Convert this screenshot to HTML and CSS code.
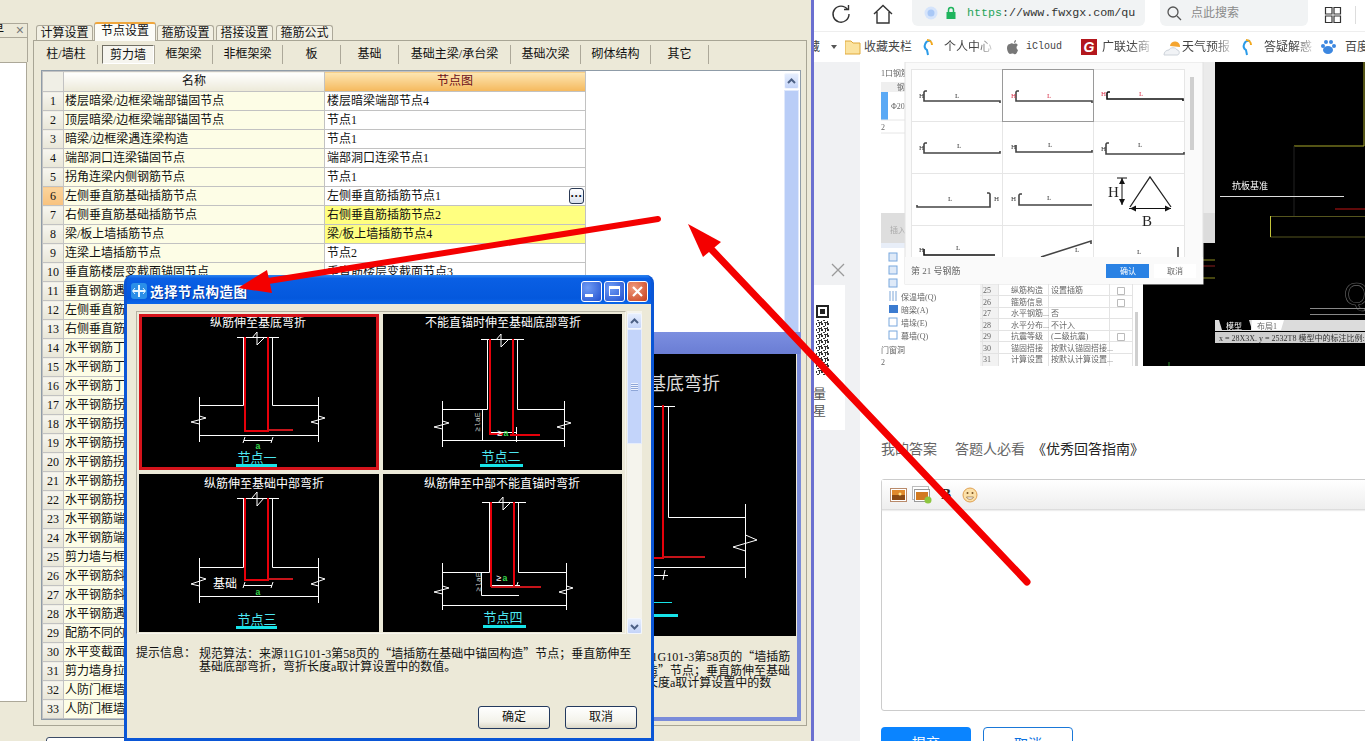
FILE: index.html
```html
<!DOCTYPE html>
<html lang="zh">
<head>
<meta charset="utf-8">
<title>节点设置</title>
<link rel="stylesheet" href="styles.css">
</head>
<body>
<div class="page">
  <section class="app">
    <aside class="dock">
      <div class="dock-head"><span class="dock-title">早</span><span class="dock-x">×</span></div>
      <div class="dock-sub"></div>
      <div class="dock-list"></div>
    </aside>
    <div class="main">
      <div class="tabs">
        <div class="tab">计算设置</div>
        <div class="tab tab-on">节点设置</div>
        <div class="tab">箍筋设置</div>
        <div class="tab">搭接设置</div>
        <div class="tab">箍筋公式</div>
      </div>
      <div class="panel">
        <div class="subtabs">
          <div class="sub w62">柱/墙柱</div>
          <div class="sub w57"><span class="pressed">剪力墙</span></div>
          <div class="sub w58">框架梁</div>
          <div class="sub w70">非框架梁</div>
          <div class="sub w58">板</div>
          <div class="sub w58">基础</div>
          <div class="sub w112">基础主梁/承台梁</div>
          <div class="sub w70">基础次梁</div>
          <div class="sub w70">砌体结构</div>
          <div class="sub w58">其它</div>
        </div>
        <div class="gridbox">
          <table class="grid">
            <colgroup><col class="c-n"><col class="c-a"><col class="c-b"></colgroup>
            <thead><tr><th class="corner"></th><th class="h-name">名称</th><th class="h-val">节点图</th></tr></thead>
            <tbody>
              <tr><th>1</th><td class="nm">楼层暗梁/边框梁端部锚固节点</td><td>楼层暗梁端部节点4</td></tr>
              <tr><th>2</th><td class="nm">顶层暗梁/边框梁端部锚固节点</td><td>节点1</td></tr>
              <tr><th>3</th><td class="nm">暗梁/边框梁遇连梁构造</td><td>节点1</td></tr>
              <tr><th>4</th><td class="nm">端部洞口连梁锚固节点</td><td>端部洞口连梁节点1</td></tr>
              <tr><th>5</th><td class="nm">拐角连梁内侧钢筋节点</td><td>节点1</td></tr>
              <tr><th class="cur">6</th><td class="nm">左侧垂直筋基础插筋节点</td><td class="has-btn">左侧垂直筋插筋节点1<span class="dots">···</span></td></tr>
              <tr><th>7</th><td class="nm">右侧垂直筋基础插筋节点</td><td class="chg">右侧垂直筋插筋节点2</td></tr>
              <tr><th>8</th><td class="nm">梁/板上墙插筋节点</td><td class="chg">梁/板上墙插筋节点4</td></tr>
              <tr><th>9</th><td class="nm">连梁上墙插筋节点</td><td>节点2</td></tr>
              <tr><th>10</th><td class="nm">垂直筋楼层变截面锚固节点</td><td>垂直筋楼层变截面节点3</td></tr>
              <tr><th>11</th><td class="nm">垂直钢筋遇</td><td></td></tr>
              <tr><th>12</th><td class="nm">左侧垂直筋</td><td></td></tr>
              <tr><th>13</th><td class="nm">右侧垂直筋</td><td></td></tr>
              <tr><th>14</th><td class="nm">水平钢筋丁</td><td></td></tr>
              <tr><th>15</th><td class="nm">水平钢筋丁</td><td></td></tr>
              <tr><th>16</th><td class="nm">水平钢筋丁</td><td></td></tr>
              <tr><th>17</th><td class="nm">水平钢筋拐</td><td></td></tr>
              <tr><th>18</th><td class="nm">水平钢筋拐</td><td></td></tr>
              <tr><th>19</th><td class="nm">水平钢筋拐</td><td></td></tr>
              <tr><th>20</th><td class="nm">水平钢筋拐</td><td></td></tr>
              <tr><th>21</th><td class="nm">水平钢筋拐</td><td></td></tr>
              <tr><th>22</th><td class="nm">水平钢筋拐</td><td></td></tr>
              <tr><th>23</th><td class="nm">水平钢筋端</td><td></td></tr>
              <tr><th>24</th><td class="nm">水平钢筋端</td><td></td></tr>
              <tr><th>25</th><td class="nm">剪力墙与框</td><td></td></tr>
              <tr><th>26</th><td class="nm">水平钢筋斜</td><td></td></tr>
              <tr><th>27</th><td class="nm">水平钢筋斜</td><td></td></tr>
              <tr><th>28</th><td class="nm">水平钢筋遇</td><td></td></tr>
              <tr><th>29</th><td class="nm">配筋不同的</td><td></td></tr>
              <tr><th>30</th><td class="nm">水平变截面</td><td></td></tr>
              <tr><th>31</th><td class="nm">剪力墙身拉</td><td></td></tr>
              <tr><th>32</th><td class="nm">人防门框墙</td><td></td></tr>
              <tr><th>33</th><td class="nm">人防门框墙</td><td></td></tr>
            </tbody>
          </table>
          <div class="gridfill"></div>
          <div class="vbar">
            <div class="sb-btn"><svg width="13" height="13" viewBox="0 0 13 13"><path d="M3 8l3.500-3.500L10 8" class="chev"/></svg></div>
            <div class="sb-thumb"></div>
          </div>
        </div>
      </div>
      <div class="strip"></div>
    </div>
  </section>

  <div class="divider"></div>

  <section class="browser">
    <div class="toolbar">
      <svg class="ic-reload" width="24" height="24" viewBox="0 0 24 24"><path d="M18.500 7.500A8 8 0 1 0 20 12" class="tool"/><path d="M15 7.500h4.500V3" class="tool"/></svg>
      <svg class="ic-home" width="24" height="24" viewBox="0 0 24 24"><path d="M3 12L12 3.500 21 12M6 10v11h12V10" class="tool"/></svg>
      <div class="addr">
        <svg width="14" height="14" viewBox="0 0 14 14"><circle cx="7" cy="7" r="6.500" fill="#d5e4fb"/><circle cx="7" cy="7" r="3.500" fill="#a9c8f6"/></svg>
        <svg width="12" height="14" viewBox="0 0 12 14"><path d="M3.500 6V4a2.500 2.500 0 0 1 5 0v2" fill="none" stroke="#1fb45d" stroke-width="1.500"/><rect x="1.500" y="6" width="9" height="7" fill="#1fb45d"/></svg>
        <span class="url"><span class="https">https</span>://www.fwxgx.com/qu</span>
      </div>
      <div class="search">
        <svg width="16" height="16" viewBox="0 0 16 16"><circle cx="7" cy="7" r="5" fill="none" stroke="#555" stroke-width="1.300"/><path d="M11 11l4 4" stroke="#555" stroke-width="1.300"/></svg>
        <span>点此搜索</span>
      </div>
      <svg class="ic-grid" width="18" height="18" viewBox="0 0 18 18"><path d="M1.500 1.500h6.500v6.500H1.500zM10 1.500h6.500v6.500H10zM1.500 10h6.500v6.500H1.500zM10 10h6.500v6.500H10z" fill="none" stroke="#333" stroke-width="1.200"/></svg>
      <div class="tool-sep"></div>
    </div>
    <div class="bookmarks">
      <span class="bm-cut">藏</span>
      <svg class="bm-caret" width="8" height="6" viewBox="0 0 8 6"><path d="M1 1h6L4 5z" fill="#555"/></svg>
      <div class="bm"><svg width="19" height="16" viewBox="0 0 19 16"><path d="M0 2h6l2 2h7v11H0z" fill="#fbe3a0" stroke="#e0a93a"/></svg><span>收藏夹栏</span></div>
      <div class="bm"><svg width="32" height="18" viewBox="0 0 32 18"><path d="M19 3a5 5 0 0 0-4 9l1 5" fill="none" stroke="#2b9be8" stroke-width="2"/><path d="M15 2a5 5 0 0 1 5 5" fill="none" stroke="#f2a81d" stroke-width="2"/></svg><span class="fade">个人中心</span></div>
      <div class="bm"><svg width="34" height="16" viewBox="0 0 34 16"><path d="M22 5c-2-1-3-1-4 0-2 0-3 2-3 4 0 3 2 6 3 6s2-1 4 0 3-1 4-4c-2-1-2-4 0-5-1-1-2-2-4-1zM22 4c0-2 1-3 2-3 0 2-1 3-2 3z" fill="#777"/></svg><span class="cloud">iCloud</span></div>
      <div class="bm"><svg width="40" height="16" viewBox="0 0 40 16"><rect x="19" y="0" width="16" height="16" fill="#b3171d"/><text x="27" y="13" class="g-mark">G</text></svg><span class="fade">广联达商</span></div>
      <div class="bm"><svg width="32" height="17" viewBox="0 0 32 17"><path d="M20 7a5 5 0 0 1 10 1z" fill="#f4a530"/><path d="M14 16c0-3 2-5 5-5 1-3 7-3 8 0 3 0 3 5 0 5z" fill="#f1f3f6" stroke="#cdd3da"/></svg><span class="fade">天气预报</span></div>
      <div class="bm"><svg width="34" height="18" viewBox="0 0 34 18"><path d="M20 3a5 5 0 0 0-4 9l1 5" fill="none" stroke="#2b9be8" stroke-width="2"/><path d="M16 2a5 5 0 0 1 5 5" fill="none" stroke="#f2a81d" stroke-width="2"/></svg><span class="fade">答疑解惑</span></div>
      <div class="bm"><svg width="33" height="16" viewBox="0 0 33 16"><g fill="#3c87e0"><ellipse cx="16" cy="11" rx="5" ry="4"/><circle cx="11" cy="7" r="2"/><circle cx="14" cy="3" r="2"/><circle cx="19" cy="3" r="2"/><circle cx="22" cy="7" r="2"/></g></svg><span>百度</span></div>
    </div>
    <div class="content">
      <aside class="gutter">
        <svg class="gut-x" width="14" height="14" viewBox="0 0 14 14"><path d="M1 1l12 12M13 1L1 13" stroke="#9a9a9a" stroke-width="1.300"/></svg>
        <div class="qrcard">
          <svg width="15" height="70" viewBox="0 0 15 70">
            <defs><pattern id="qrn" width="6" height="6" patternUnits="userSpaceOnUse"><path d="M0 0h2v2H0zM4 0h1v3H4zM2 3h2v1H2zM0 4h1v2H0zM3 5h3v1H3z" fill="#333"/></pattern></defs>
            <rect x="1" y="0" width="13" height="13" fill="#222"/><rect x="3" y="2" width="9" height="9" fill="#fff"/><rect x="5" y="4" width="5" height="5" fill="#222"/>
            <rect x="1" y="15" width="13" height="55" fill="url(#qrn)"/>
          </svg>
          <span class="qr-t1">量</span>
          <span class="qr-t2">星</span>
        </div>
      </aside>
      <div class="article">
        <svg class="shot" width="484" height="304" viewBox="0 0 484 304">
          <rect width="484" height="304" fill="#fff"/>
          <rect x="334" width="150" height="304" fill="#000"/>
          <rect x="322" width="12" height="151" fill="#ebebeb"/>
          <rect x="322" y="151" width="12" height="30" fill="#dcdcdc"/>
          <rect x="322" y="181" width="12" height="123" fill="#000"/>
          <rect x="262" y="222" width="72" height="82" fill="#000"/>
          <path d="M322 198h12" stroke="#8c8c1e"/><path d="M322 204h12" stroke="#8c1e1e"/><path d="M322 216h12" stroke="#8c8c1e"/>
          <!-- left fragments of captured page -->
          <text x="0" y="14" class="s8 gr">1口钢筋</text>
          <rect y="20" width="24" height="10" fill="#efefef"/><text x="16" y="28" class="s8 gr">钢</text>
          <rect y="30" width="7" height="28" fill="#5aa9f5"/><text x="10" y="47" class="s8 gr">Φ20</text>
          <path d="M0 58h24M0 71h24" stroke="#e6e6e6"/><text x="0" y="68" class="s8 gr">2</text>
          <rect y="151" width="24" height="30" fill="#dedede"/><text x="9" y="171" class="s8 lt">插入</text>
          <rect y="181" width="24" height="5" fill="#e8eef8"/>
          <rect x="8" y="191" width="8" height="8" fill="#dfeaf8" stroke="#78a7de"/>
          <rect x="8" y="204" width="8" height="8" fill="#dfeaf8" stroke="#78a7de"/>
          <rect x="8" y="217" width="8" height="8" fill="#dfeaf8" stroke="#78a7de"/>
          <path d="M9 229v10M12 229v10M15 229v10" stroke="#7da6d8"/>
          <rect x="8" y="243" width="9" height="8" fill="#3b7bd0"/>
          <rect x="8" y="256" width="8" height="8" fill="#fff" stroke="#78a7de"/>
          <rect x="8" y="269" width="8" height="8" fill="#fff" stroke="#78a7de"/>
          <text x="20" y="238" class="s8 gr">保温墙(Q)</text>
          <text x="20" y="251" class="s8 gr">暗梁(A)</text>
          <text x="20" y="264" class="s8 gr">墙垛(E)</text>
          <text x="20" y="277" class="s8 gr">幕墙(Q)</text>
          <text x="0" y="291" class="s8 gr">门窗洞</text>
          <text x="0" y="303" class="s8 gr">2</text>
          <!-- property table -->
          <rect x="99" y="222" width="163" height="82" fill="#fff"/>
          <rect x="99" y="222" width="18" height="82" fill="#f2f2f2"/>
          <path d="M101.500 222v82M117.500 222v82M167.500 222v82M228.500 222v82M251.500 222v82M99 233.500h153M99 245.500h153M99 256.500h153M99 268.500h153M99 279.500h153M99 291.500h153" stroke="#e3e3e3"/>
          <rect x="254" y="250" width="3" height="54" fill="#cfcfcf"/>
          <g class="s8 gr">
            <text x="102" y="231">25</text><text x="130" y="231">纵筋构造</text><text x="170" y="231">设置插筋</text>
            <text x="102" y="243">26</text><text x="130" y="243">箍筋信息</text>
            <text x="102" y="254">27</text><text x="130" y="254">水平钢筋...</text><text x="170" y="254">否</text>
            <text x="102" y="266">28</text><text x="130" y="266">水平分布...</text><text x="170" y="266">不计入</text>
            <text x="102" y="277">29</text><text x="130" y="277">抗震等级</text><text x="170" y="277">(二级抗震)</text>
            <text x="102" y="289">30</text><text x="130" y="289">锚固搭接</text><text x="170" y="289">按默认锚固搭接...</text>
            <text x="102" y="300">31</text><text x="130" y="300">计算设置</text><text x="170" y="300">按默认计算设置...</text>
          </g>
          <path d="M236.500 225.500h7v7h-7zM236.500 237.500h7v7h-7zM236.500 271.500h7v7h-7z" fill="#fff" stroke="#bbb"/>
          <!-- CAD drawing -->
          <path d="M413 84h70V0" fill="none" stroke="#a8a82a"/>
          <path d="M413 84v70" stroke="#222"/>
          <path d="M339 134.500h124" stroke="#ddd"/>
          <path d="M454 147h30" stroke="#c01515"/>
          <path d="M389.500 175V154.500H484M389.500 175H484" fill="none" stroke="#55551e"/>
          <path d="M389.500 154v21" stroke="#c4c43a"/>
          <text x="351" y="127" class="cad-note">抗板基准</text>
          <text x="463" y="243" class="cad-q">Q2</text>
          <path d="M429 246.500h55M429 252.500h55" stroke="#888"/>
          <rect x="334" y="258" width="150" height="11" fill="#dcdcdc"/>
          <path d="M338 258h30l3 10h-30z" fill="#000"/><text x="345" y="267" class="s8 wh">模型</text>
          <path d="M371 258h32l-3 10h-30z" fill="#fff"/><text x="376" y="267" class="s8 gr">布局1</text>
          <rect x="334" y="270" width="150" height="11" fill="#cfcfcf"/>
          <text x="338" y="279" class="s8 dk">x = 28X3X. y = 2532T8 模型中的标注比例:1</text>
          <path d="M288 300v4" stroke="#2a8a2a"/>
          <!-- rebar picker dialog -->
          <rect x="24" y="0" width="298" height="222" fill="#fafafa" stroke="#e2e2e2"/>
          <rect x="30" y="7" width="273" height="188" fill="#fff"/>
          <path d="M30.500 7v188M121.500 7v188M212.500 7v188M303.500 7v188M30 7.500h273M30 59.500h273M30 111.500h273M30 163.500h273" stroke="#e6e6e6"/>
          <rect x="121.500" y="7.500" width="91" height="52" fill="none" stroke="#9a9a9a"/>
          <rect x="309" y="15" width="4" height="73" fill="#cfcfcf"/>
          <path d="M46 29h-2l-1 1v9h76v2" class="bar"/><text x="38" y="36" class="s7 dk">H</text><text x="74" y="36" class="s7 dk">L</text>
          <path d="M138 29h-2l-1 1v9h76v2" class="bar"/><text x="130" y="36" class="s7 rd">H</text><text x="166" y="36" class="s7 rd">L</text>
          <path d="M229 30h-2l-1 1v6h76v2" class="bar bar-k"/><text x="220" y="34" class="s7 rd">H</text><text x="258" y="34" class="s7 rd">L</text>
          <path d="M46 81h-2l-1 1v9h76v-2" class="bar"/><text x="38" y="88" class="s7 dk">H</text><text x="76" y="86" class="s7 dk">L</text>
          <path d="M135 83v7h76v-2" class="bar"/><text x="130" y="87" class="s7 dk">H</text><text x="167" y="85" class="s7 dk">L</text>
          <path d="M228 81h-2l-1 1v10h78v-2" class="bar"/><text x="220" y="89" class="s7 dk">H</text><text x="257" y="85" class="s7 dk">L</text>
          <path d="M36 143v2h73v-13l-1-1h-2" class="bar"/><text x="113" y="139" class="s7 dk">H</text><text x="67" y="139" class="s7 dk">L</text>
          <path d="M141 132h-2l-1 1v10h73" class="bar"/><text x="130" y="139" class="s7 dk">H</text><text x="166" y="138" class="s7 dk">L</text>
          <path d="M249 145l20-30 21 30" fill="none" stroke="#222" stroke-width="1.300"/>
          <path d="M248 146.500h42M241 116v27M236 116h10" fill="none" stroke="#111"/>
          <path d="M241 116l-3 6h6zM241 143l-3-6h6zM249 146.500l6-3v6zM290 146.500l-6-3v6z" fill="#111"/>
          <text x="227" y="135" class="big-l">H</text><text x="261" y="164" class="big-l">B</text>
          <path d="M43 187v6h71" class="bar bar-k"/><text x="38" y="190" class="s7 dk">H</text><text x="75" y="188" class="s7 dk">L</text>
          <path d="M160 195l50-16v3" class="bar"/><text x="194" y="190" class="s7 dk">L</text>
          <path d="M297 185v10" class="bar"/><text x="256" y="192" class="s7 dk">L</text>
          <rect x="24" y="195" width="298" height="27" fill="#fafafa"/>
          <text x="30" y="212" class="s9 gr">第 21 号钢筋</text>
          <rect x="225" y="202" width="43" height="14" fill="#2a82e4"/><text x="239" y="212" class="s8 wh">确认</text>
          <rect x="273" y="202" width="42" height="14" fill="#fff"/><text x="286" y="212" class="s8 gr">取消</text>
        </svg>
        <div class="answer-head"><span class="ah1">我的答案</span><span class="ah2">答题人必看</span><span class="ah3">《优秀回答指南》</span></div>
        <div class="editor">
          <div class="ed-bar">
            <svg width="17" height="14" viewBox="0 0 17 14"><rect x=".5" y=".5" width="16" height="13" fill="#fff" stroke="#b98a6a"/><rect x="2" y="2" width="13" height="10" fill="#8a4a14"/><rect x="2" y="2" width="13" height="5" fill="#e08a2c"/><circle cx="10" cy="6" r="1.500" fill="#ffe48a"/></svg>
            <svg width="20" height="18" viewBox="0 0 20 18"><rect x=".5" y=".5" width="16" height="13" fill="#fff" stroke="#bbb"/><rect x="2.500" y="3.500" width="15" height="12" fill="#fff" stroke="#999"/><rect x="4" y="6" width="12" height="8" fill="#d27a20"/><circle cx="16" cy="14" r="3.500" fill="#8dc63f"/></svg>
            <span class="ed-b">B</span>
            <svg width="16" height="16" viewBox="0 0 16 16"><circle cx="8" cy="8" r="7" fill="#fbe0a8" stroke="#e0a050"/><circle cx="5.500" cy="6" r="1" fill="#7a5020"/><circle cx="10.500" cy="6" r="1" fill="#7a5020"/><path d="M4.500 10h7c-1 3-6 3-7 0z" fill="#fff" stroke="#7a5020" stroke-width=".6"/></svg>
          </div>
        </div>
        <div class="actions"><div class="btn-submit">提交</div><div class="btn-cancel">取消</div></div>
      </div>
    </div>
  </section>

  <!-- window behind the dialog -->
  <div class="backwin">
    <div class="back-title"></div>
    <svg class="back-pic" width="292" height="282" viewBox="504 354 292 282">
      <rect x="504" y="354" width="292" height="282" fill="#000"/>
      <text x="720" y="390" class="back-h" text-anchor="end">基底弯折</text>
      <path d="M653 406.500h22M668.500 406V517.500H745.500M745.500 504V578M653 567.500H745.500M653 575.500h15M665 570l-2 10" class="w"/>
      <path d="M745.500 535L757 540 733 547 745.500 551" class="w"/>
      <path d="M663 405V558H653" class="r"/>
      <path d="M663 557h42" class="r2"/>
      <path d="M653 602.500h19" class="cy"/>
      <rect x="653" y="614" width="25" height="3" fill="#17e3e8"/>
    </svg>
    <div class="back-clip"><div class="back-text">规范算法：来源11G101-3第58页的<span class="q">“</span>墙插筋<br>在基础中锚固构造<span class="q">”</span>节点；垂直筋伸至基础<br>底部弯折，弯折长度a取计算设置中的数</div></div>
  </div>

  <!-- dialog -->
  <div class="dialog">
    <div class="dlg-title">
      <svg width="16" height="16" viewBox="0 0 16 16"><rect width="16" height="16" rx="3" fill="#2b8fe8"/><path d="M8 2v12M2 8h12" stroke="#e8f6ff" stroke-width="2"/><path d="M4 5L1.500 8 4 11M12 5l2.500 3L12 11" fill="none" stroke="#e8f6ff"/></svg>
      <span class="dlg-name">选择节点构造图</span>
      <span class="cap cap-min"><i class="g-min"></i></span>
      <span class="cap cap-max"><i class="g-max"></i></span>
      <span class="cap cap-close"><svg width="13" height="13" viewBox="0 0 13 13"><path d="M2 2l9 9M11 2l-9 9" stroke="#fff" stroke-width="2.200"/></svg></span>
    </div>
    <div class="dlg-body">
      <div class="pics">
        <div class="picgrid">
          <svg class="fig fig-on" width="240" height="156" viewBox="0 0 240 156">
            <rect width="240" height="156" fill="#000"/>
            <text x="119" y="13" class="t">纵筋伸至基底弯折</text>
            <path d="M98 23.500H140M104.500 23V91.500H60.500M133.500 23V91.500H179.500M60.500 83V128M179.500 83V128M60 121.500H180M105 126.500H133M106 123l-2 6M134 123l-2 6" class="w"/>
            <path d="M113 24L118 18V31L125 24M60.500 102L67 104 52 108 60.500 110M179.500 102L186 104 172 108 179.500 110" class="w"/>
            <path d="M106 23V117H129V23" class="r"/>
            <path d="M129 116H154" class="r2"/>
            <text x="119" y="135" class="a">a</text>
            <text x="118" y="148" class="lab">节点一</text>
            <rect x="97" y="150" width="41" height="3" fill="#17e3e8"/>
            <rect x="1.500" y="1.500" width="237" height="153" class="sel"/>
          </svg>
          <svg class="fig" width="239" height="156" viewBox="0 0 239 156">
            <rect width="239" height="156" fill="#000"/>
            <text x="120" y="13" class="t">不能直锚时伸至基础底部弯折</text>
            <path d="M98 25.500H141M104.500 25V95.500H59.500M134.500 25V95.500H181.500M59.500 87V133M181.500 87V133M59 126.500H182M99.500 96V126.500M107 118.500H134M133.500 113V128" class="w"/>
            <path d="M113 26L118 20V33L125 26M59.500 107L66 109 51 113 59.500 115M181.500 107L188 109 174 113 181.500 115" class="w"/>
            <path d="M107 25V120H120M130 25V120" class="r"/>
            <path d="M127 121H157" class="r"/>
            <text x="117" y="122" class="ge">≥</text><text x="123" y="122" class="a">a</text>
            <text transform="translate(97 108) rotate(-90)" class="la">≥laE</text>
            <text x="118" y="147" class="lab">节点二</text>
            <rect x="97" y="150" width="43" height="3" fill="#17e3e8"/>
          </svg>
          <svg class="fig" width="240" height="158" viewBox="0 0 240 158">
            <rect width="240" height="158" fill="#000"/>
            <text x="125" y="14" class="t">纵筋伸至基础中部弯折</text>
            <path d="M98 24.500H140M104.500 24V93.500H60.500M133.500 24V93.500H179.500M60.500 84V129M179.500 84V129M60 122.500H180M105 111.500H133M106 108l-2 6M134 108l-2 6" class="w"/>
            <path d="M113 24L118 18V32L125 24M60.500 103L67 105 52 110 60.500 112M179.500 103L186 105 172 110 179.500 112" class="w"/>
            <path d="M106 24V106H129V24" class="r"/>
            <path d="M129 105H154" class="r2"/>
            <text x="86" y="114" class="t">基础</text>
            <text x="119" y="121" class="a">a</text>
            <text x="118" y="150" class="lab">节点三</text>
            <rect x="97" y="152" width="41" height="3" fill="#17e3e8"/>
          </svg>
          <svg class="fig" width="239" height="158" viewBox="0 0 239 158">
            <rect width="239" height="158" fill="#000"/>
            <text x="119" y="14" class="t">纵筋伸至中部不能直锚时弯折</text>
            <path d="M99 28.500H143M106.500 28V98.500H59.500M135.500 28V98.500H183.500M59.500 89V136M183.500 89V136M59 131.500H184M98.500 99V121.500H136M108 111.500H137M135 108l-2 6" class="w"/>
            <path d="M115 29L120 23V36L127 29M59.500 112L66 114 51 118 59.500 120M183.500 112L190 114 176 118 183.500 120" class="w"/>
            <path d="M108 28V113M131 28V113" class="r"/>
            <path d="M108 113H158" class="r2"/>
            <text x="116" y="107" class="ge">≥</text><text x="122" y="107" class="a">a</text>
            <text transform="translate(98 108) rotate(-90)" class="la">≥laE</text>
            <text x="120" y="148" class="lab">节点四</text>
            <rect x="100" y="151" width="43" height="3" fill="#17e3e8"/>
          </svg>
        </div>
        <div class="dlg-bar">
          <div class="sb-btn"><svg width="13" height="13" viewBox="0 0 13 13"><path d="M3 8l3.500-3.500L10 8" class="chev"/></svg></div>
          <div class="dlg-thumb"><span class="grip"></span></div>
          <div class="dlg-track"></div>
          <div class="sb-btn"><svg width="13" height="13" viewBox="0 0 13 13"><path d="M3 5l3.500 3.500L10 5" class="chev"/></svg></div>
        </div>
      </div>
      <div class="hint">
        <div class="hint-l">提示信息：</div>
        <div class="hint-t">规范算法：来源11G101-3第58页的<span class="q">“</span>墙插筋在基础中锚固构造<span class="q">”</span>节点；垂直筋伸至<br>基础底部弯折，弯折长度a取计算设置中的数值。</div>
      </div>
      <div class="dlg-btns"><div class="xp-btn">确定</div><div class="xp-btn">取消</div></div>
    </div>
  </div>

  <!-- hand-drawn annotation arrows -->
  <svg class="marks" width="1365" height="741" viewBox="0 0 1365 741">
    <path d="M658 219L262 282" stroke="#f40000" stroke-width="6" stroke-linecap="round"/>
    <path d="M238 288L267 270 272 293z" fill="#f40000"/>
    <path d="M1027 582L712 250" stroke="#f40000" stroke-width="7" stroke-linecap="round"/>
    <path d="M688 224L721 242 703 257z" fill="#f40000"/>
  </svg>
</div>
</body>
</html>
```
FILE: styles.css
```css
* { box-sizing: border-box; }
html, body { margin: 0; padding: 0; }
body {
  font: 12px/1.2 "Liberation Serif", "Noto Sans CJK SC", serif;
  color: #111;
  background: #fff;
}
.page {
  position: relative;
  display: flex;
  width: 1365px;
  height: 741px;
  overflow: hidden;
}

/* left application */
.app {
  display: flex;
  flex: none;
  width: 811px;
  height: 741px;
  background: #ece9d8;
}
.dock { flex: none; width: 28px; margin-right: 5px; padding-top: 23px; }
.dock-head {
  display: flex;
  justify-content: space-between;
  height: 15px;
  overflow: hidden;
  border: 1px solid #aca899;
  border-left: 0;
  line-height: 13px;
}
.dock-title { margin-left: -8px; }
.dock-x { margin-right: 3px; color: #777; font: 14px/13px "Liberation Sans", sans-serif; }
.dock-sub { height: 24px; border-right: 1px solid #aca899; }
.dock-list {
  width: 27px;
  height: 640px;
  background: #fff;
  border: 1px solid #aca899;
  border-left: 0;
}
.main { flex: none; width: 774px; padding-top: 22px; }
.tabs { display: flex; gap: 1px; height: 18px; padding-left: 3px; align-items: flex-end; }
.tab {
  position: relative;
  width: 57px;
  height: 15px;
  background: #f2f0e4;
  border: 1px solid #aca899;
  border-bottom: 0;
  border-radius: 3px 3px 0 0;
  text-align: center;
  line-height: 15px;
}
.tab:nth-child(4) { margin-left: 1px; }
.tab:nth-child(5) { margin-left: 2px; }
.tab-on {
  width: 62px;
  height: 19px;
  margin-bottom: -1px;
  background: #fcfcf8;
  border-top: 2px solid #f0a63c;
  line-height: 15px;
  z-index: 1;
}
.panel {
  height: 686px;
  border: 1px solid #a8a595;
  background: #ece9d8;
  padding: 4px 0 0 1px;
}
.subtabs { display: flex; height: 19px; }
.sub {
  flex: none;
  display: flex;
  align-items: center;
  justify-content: center;
  border-right: 1px solid #aca899;
  height: 19px;
}
.w57 { width: 57px; justify-content: flex-end; }
.w58 { width: 58px; }
.w62 { width: 63px; }
.w70 { width: 70px; }
.w112 { width: 112px; }
.pressed {
  display: block;
  width: 52px;
  height: 19px;
  text-align: center;
  line-height: 18px;
  background: #f6f5ef;
  border: 1px solid;
  border-color: #716f64 #fff #fff #716f64;
}
.gridbox {
  display: flex;
  width: 760px;
  height: 650px;
  margin: 6px 0 0 6px;
  background: #fff;
  border: 1px solid #8f9ca8;
}
.grid {
  flex: none;
  width: 543px;
  border-collapse: collapse;
  table-layout: fixed;
  margin-top: 0;
  align-self: flex-start;
}
.c-n { width: 21px; }
.c-a { width: 261px; }
.c-b { width: 261px; }
.grid th, .grid td {
  height: 19px;
  padding: 0 2px;
  border: 1px solid #c2c2c2;
  font-weight: normal;
  line-height: 17px;
  white-space: nowrap;
  overflow: hidden;
  text-align: left;
}
.grid tbody th {
  text-align: center;
  padding: 0;
  background: linear-gradient(#f7f6f0, #e8e6d8);
}
.grid tbody th.cur { background: linear-gradient(#fbd49c, #f8c27e); }
.corner { background: #f0efe6; }
.grid thead th {
  text-align: center;
  height: 20px;
}
.h-name { background: linear-gradient(#fff, #ece9d8); }
.grid thead .h-val { background: linear-gradient(#fde7b4, #f5b85c); color: #6b0f1a; }
.grid .nm { background: #fdfde6; padding-left: 1px; }
.chg { background: #ffff80; }
.has-btn { position: relative; }
.dots {
  position: absolute;
  right: 1px;
  top: 1px;
  width: 15px;
  height: 16px;
  border: 1px solid #2b3a55;
  border-radius: 3px;
  background: linear-gradient(#fff, #d8e0ee);
  font: bold 12px/14px "Liberation Sans", sans-serif;
  text-align: center;
}
.gridfill { flex: 1; }
.vbar { flex: none; width: 17px; padding: 2px 1px 0 1px; }
.sb-btn {
  display: flex;
  align-items: center;
  justify-content: center;
  width: 15px;
  height: 16px;
  background: linear-gradient(#e6eefd, #c4d4f8);
  border: 1px solid #f2f6fe;
  border-radius: 2px;
}
.chev { fill: none; stroke: #4d6185; stroke-width: 2; }
.sb-thumb {
  height: 620px;
  margin-top: 1px;
  background: #b9cdf7;
  border: 1px solid #dfe8fb;
}
.strip {
  width: 400px;
  height: 20px;
  margin: 11px 0 0 13px;
  background: #fff;
  border: 1px solid #3b4b66;
  border-radius: 3px;
}

.divider { flex: none; width: 3px; background: #6b70d0; }

/* browser */
.browser { flex: 1; min-width: 0; background: #fff; }
.toolbar {
  display: flex;
  align-items: flex-start;
  height: 32px;
  border-bottom: 1px solid #eee;
}
.tool { fill: none; stroke: #333; stroke-width: 1.400; }
.ic-reload { margin: 2px 0 0 15px; flex: none; }
.ic-home { margin: 2px 0 0 18px; flex: none; }
.addr {
  flex: none;
  display: flex;
  align-items: center;
  gap: 7px;
  width: 233px;
  height: 26px;
  margin-left: 17px;
  padding-left: 12px;
  background: #f1f3f4;
  border-radius: 0 0 6px 6px;
}
.url {
  font: 11.700px/26px "Liberation Mono", monospace;
  color: #333;
  white-space: nowrap;
  margin-left: 3px;
}
.https { color: #1fa45a; }
.search {
  flex: none;
  display: flex;
  align-items: center;
  gap: 9px;
  width: 148px;
  height: 26px;
  margin-left: 15px;
  padding-left: 6px;
  background: #f1f3f4;
  border-radius: 0 0 6px 6px;
  color: #8a8a8a;
  font-size: 12px;
}
.ic-grid { flex: none; margin: 6px 0 0 16px; }
.tool-sep { width: 1px; height: 18px; margin: 6px 0 0 13px; background: #ddd; }
.bookmarks {
  display: flex;
  align-items: center;
  height: 30px;
  color: #444;
  white-space: nowrap;
  overflow: hidden;
}
.bm-cut { flex: none; width: 6px; direction: rtl; overflow: hidden; }
.bm-caret { flex: none; margin: 0 0 0 10px; }
.bm { flex: none; display: flex; align-items: center; }
.bm:nth-of-type(1) { margin-left: 7px; }
.bm span { display: block; }
.fade {
  -webkit-mask-image: linear-gradient(to right, #000 65%, rgba(0,0,0,.25));
  mask-image: linear-gradient(to right, #000 65%, rgba(0,0,0,.25));
}
.cloud { font-family: "Liberation Mono", monospace; font-size: 10px; }
.g-mark { font: italic bold 14px "Liberation Sans", sans-serif; fill: #fff; text-anchor: middle; }
.content { display: flex; height: 679px; }
.gutter { flex: none; width: 46px; background: #f0f1f3; padding-top: 201px; }
.gut-x { display: block; margin-left: 17px; }
.qrcard {
  display: flex;
  flex-direction: column;
  align-items: flex-start;
  width: 31px;
  height: 145px;
  margin-top: 8px;
  padding-top: 20px;
  background: #fff;
  overflow: hidden;
}
.qrcard svg { flex: none; margin-left: 1px; }
.qr-t1, .qr-t2 { font-size: 13px; color: #555; margin-left: -1px; line-height: 17px; }
.qr-t1 { margin-top: 10px; }
.article { flex: 1; min-width: 0; padding-left: 21px; overflow: hidden; }
.shot { display: block; filter: blur(.4px); }
.s7 { font-size: 7px; }
.s8 { font-size: 8px; }
.s9 { font-size: 9px; }
.gr { fill: #666; }
.lt { fill: #aaa; }
.wh { fill: #fff; }
.dk { fill: #333; }
.rd { fill: #d8324a; }
.bar { fill: none; stroke: #444; stroke-width: 1.600; }
.bar-k { stroke: #111; }
.big-l { font: 15px "Liberation Serif", serif; fill: #222; }
.cad-note { font-size: 9px; fill: #fff; letter-spacing: 0; }
.cad-q { font: 32px "Liberation Sans", sans-serif; fill: none; stroke: #6a6a6a; stroke-width: .6; }
.answer-head {
  display: flex;
  height: 17px;
  margin-top: 74px;
  font-size: 14px;
  line-height: 17px;
  font-family: "Noto Sans CJK SC", sans-serif;
  white-space: nowrap;
}
.ah1, .ah2 { color: #666; margin-right: 18px; }
.ah2 { margin-right: 14px; }
.ah3 { color: #222; margin-left: -7px; }
.editor {
  width: 520px;
  height: 232px;
  margin-top: 22px;
  border: 1px solid #ccc;
  border-radius: 3px;
}
.ed-bar {
  display: flex;
  align-items: center;
  height: 30px;
  padding-left: 8px;
  gap: 5px;
  background: linear-gradient(#fff, #eeeeee);
  border-bottom: 1px solid #ddd;
  box-shadow: 0 1px 1px #eee;
}
.ed-b { font: bold 15px "Liberation Serif", serif; color: #222; margin: 0 6px 0 4px; }
.actions { display: flex; gap: 12px; margin-top: 16px; }
.btn-submit, .btn-cancel {
  width: 90px;
  height: 34px;
  border-radius: 4px;
  text-align: center;
  line-height: 30px;
  font-size: 14px;
  font-family: "Noto Sans CJK SC", sans-serif;
}
.btn-submit { background: #0a84ff; color: #fff; }
.btn-cancel { border: 1px solid #1a78d8; color: #0a70e0; background: #fff; }

/* window behind dialog */
.backwin {
  position: absolute;
  left: 500px;
  top: 332px;
  width: 301px;
  height: 389px;
  background: #ece9d8;
  border: 4px solid #7a8bd9;
  border-top: 0;
}
.back-title { height: 22px; background: linear-gradient(#7c8fe0, #6a7dd4); margin: 0 -4px; }
.back-pic { display: block; }
.back-h { font-size: 18px; fill: #ddd; }
.w { fill: none; stroke: #fff; }
.r { fill: none; stroke: #e6000a; stroke-width: 2; }
.r2 { fill: none; stroke: #c6141a; stroke-width: 2; }
.cy { stroke: #17e3e8; }
.q { font-family: "Noto Sans CJK SC", sans-serif; }
.back-clip {
  width: 143px;
  margin: 14px 0 0 149px;
  overflow: hidden;
}
.back-text {
  margin-left: -91px;
  line-height: 12.500px;
  white-space: nowrap;
}

/* dialog */
.dialog {
  position: absolute;
  left: 124px;
  top: 275px;
  width: 530px;
  height: 466px;
  display: flex;
  flex-direction: column;
  background: #0a56d6;
  border: 3px solid #0a56d6;
  border-top: 0;
  border-radius: 8px 8px 0 0;
  overflow: hidden;
  z-index: 3;
}
.dlg-title {
  flex: none;
  display: flex;
  align-items: center;
  height: 29px;
  padding: 3px 3px 0 4px;
  background: linear-gradient(#2e86f0 0, #0a5fe4 12%, #0458dd 80%, #0a66ea 100%);
}
.dlg-name {
  flex: 1;
  margin-left: 3px;
  color: #fff;
  font: bold 13.500px/16px "Noto Sans CJK SC", sans-serif;
  letter-spacing: .4px;
  text-shadow: 1px 1px 0 #0338a0;
}
.cap {
  flex: none;
  display: flex;
  align-items: center;
  justify-content: center;
  width: 21px;
  height: 21px;
  margin-left: 2px;
  border: 1px solid #fff;
  border-radius: 3px;
  background: radial-gradient(circle at 30% 30%, #6f9cf5, #2150cf);
}
.cap-close { background: radial-gradient(circle at 30% 30%, #ef9a7c, #c8401c); }
.g-min { display: block; width: 8px; height: 3px; margin: 8px 6px 0 0; background: #fff; }
.g-max { display: block; width: 11px; height: 10px; border: 1px solid #fff; border-top-width: 3px; }
.dlg-body {
  flex: 1;
  display: flex;
  flex-direction: column;
  padding: 7px 0 0 9px;
  background: #ece9d8;
}
.pics { flex: none; display: flex; height: 323px; }
.picgrid {
  flex: none;
  display: grid;
  grid-template-columns: 240px 239px;
  grid-template-rows: 156px 158px;
  gap: 4px;
  width: 490px;
  padding: 2px 0 0 2px;
  border: 1px solid;
  border-color: #b5b2a2 #f6f5ee #f6f5ee #b5b2a2;
}
.fig { display: block; }
.t { font-size: 12px; fill: #fff; text-anchor: middle; }
.sel { fill: none; stroke: #d5131b; stroke-width: 3; }
.a { font: bold 9px "Liberation Mono", monospace; fill: #35d24a; text-anchor: middle; }
.ge { font: 9px "Liberation Sans", sans-serif; fill: #fff; text-anchor: middle; }
.la { font: 8px "Liberation Mono", monospace; fill: #ccc; text-anchor: middle; }
.lab { font-size: 13px; fill: #4de6f0; text-anchor: middle; }
.dlg-bar {
  flex: none;
  display: flex;
  flex-direction: column;
  width: 15px;
  margin-left: 1px;
  padding-top: 2px;
  height: 323px;
  background: #f5f4ed;
}
.dlg-thumb {
  display: flex;
  align-items: center;
  justify-content: center;
  height: 115px;
  margin-top: 0;
  background: #c3d4fa;
  border: 1px solid #e6edfc;
}
.grip {
  width: 7px;
  height: 8px;
  background: repeating-linear-gradient(#eef3fe 0, #eef3fe 1px, #8ea6d8 1px, #8ea6d8 2px);
}
.dlg-track { flex: 1; }
.hint { flex: none; display: flex; height: 59px; margin-top: 13px; line-height: 12.500px; white-space: nowrap; }
.hint-l { flex: none; width: 63px; }
.dlg-btns { flex: none; display: flex; gap: 15px; padding-left: 342px; }
.xp-btn {
  width: 72px;
  height: 23px;
  text-align: center;
  line-height: 21px;
  border: 1px solid #23395e;
  border-radius: 3px;
  background: linear-gradient(#fff, #f3f2ea 70%, #dcd8c8);
}

/* annotation */
.marks {
  position: absolute;
  left: 0;
  top: 0;
  z-index: 5;
  pointer-events: none;
}
```
